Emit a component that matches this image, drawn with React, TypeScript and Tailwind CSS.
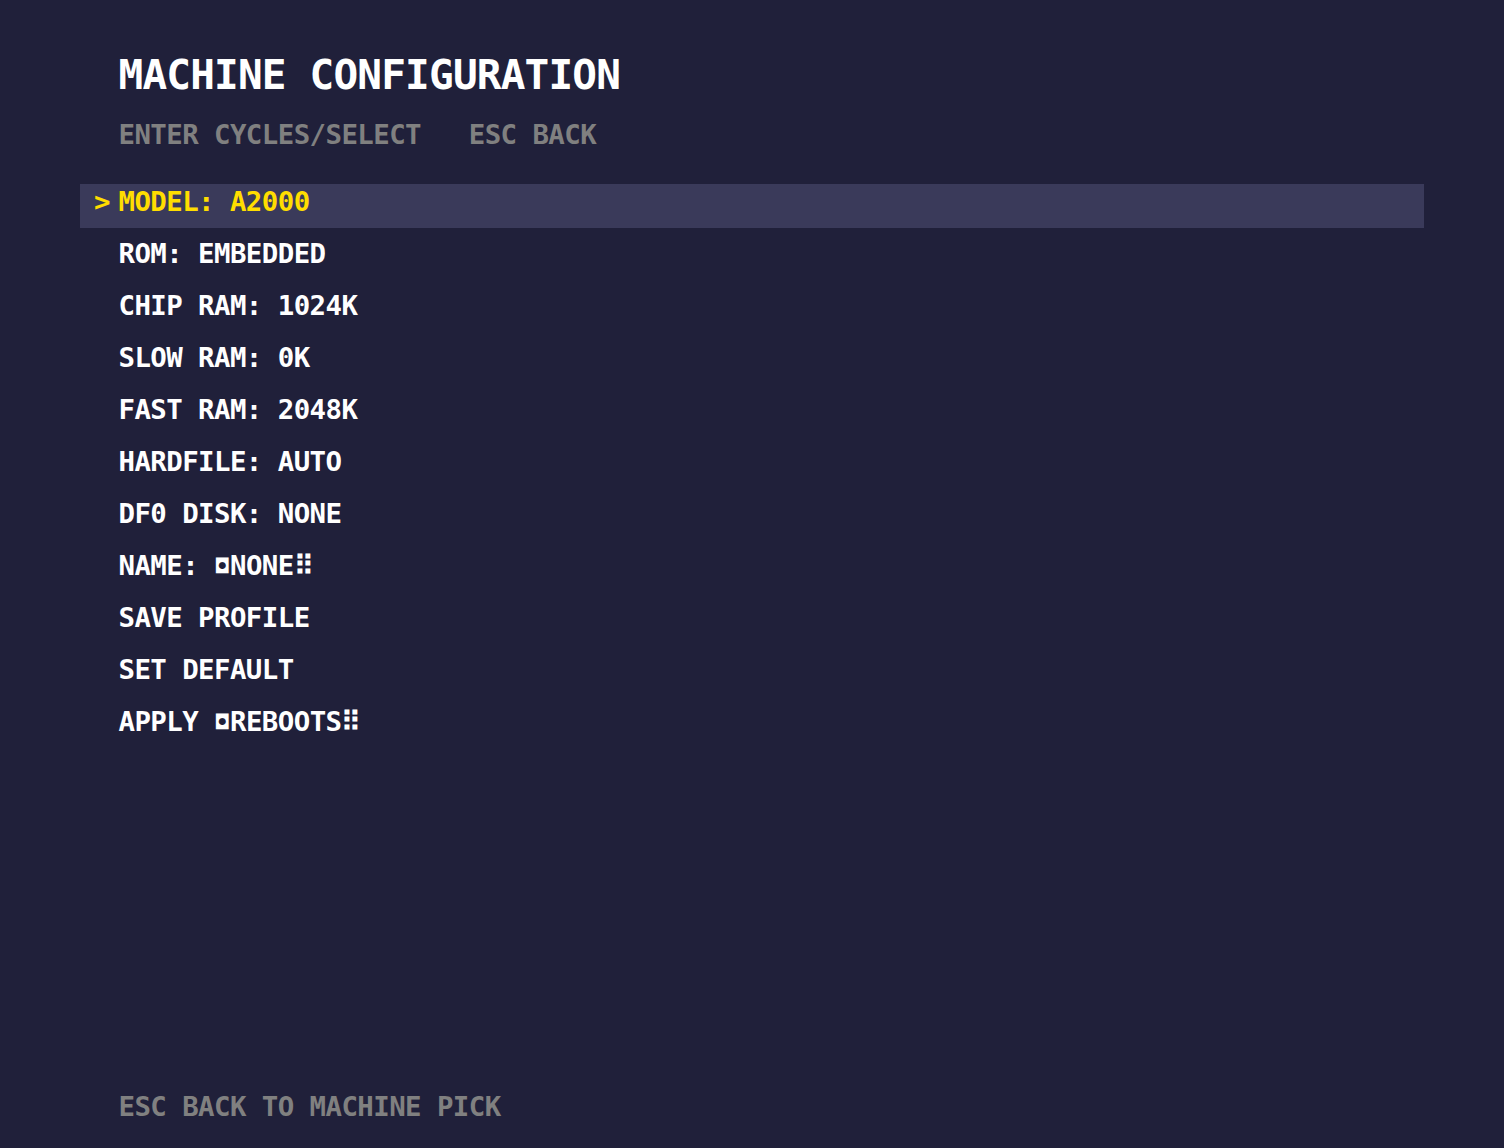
import React from "react";

const rows = [
  "MODEL: A2000",
  "ROM: EMBEDDED",
  "CHIP RAM: 1024K",
  "SLOW RAM: 0K",
  "FAST RAM: 2048K",
  "HARDFILE: AUTO",
  "DF0 DISK: NONE",
  "NAME: |NONE|",
  "SAVE PROFILE",
  "SET DEFAULT",
  "APPLY |REBOOTS|",
];

const mono = "font-['DejaVu_Sans_Mono',monospace] font-bold whitespace-pre";

const Label = ({ text }: { text: string }) => {
  const parts = text.split("|");
  if (parts.length === 1) return <span>{text}</span>;
  return (
    <span className="flex items-center">
      <span>{parts[0]}</span>
      <span className="w-[16px] pl-[2px] text-[20px] leading-[36px] tracking-normal">◘</span>
      <span>{parts[1]}</span>
      <span className="w-[16px] text-[27.4px] tracking-normal">⠿</span>
    </span>
  );
};

const App: React.FC = () => {
  return (
    <div className="h-screen w-full bg-[#20203a] flex flex-col px-20 pt-[50px] pb-[19px] overflow-hidden">
      <h1 className={`${mono} pl-[38.5px] text-[41px] leading-[50px] tracking-[-0.8px] text-white`}>
        MACHINE CONFIGURATION
      </h1>
      <p className={`${mono} pl-[38.5px] mt-[13px] text-[27.4px] leading-[44px] tracking-[-0.57px] text-[#808080]`}>
        {"ENTER CYCLES/SELECT   ESC BACK"}
      </p>
      <ul className="mt-[27px] flex flex-col gap-2">
        {rows.map((row, i) => (
          <li
            key={row}
            className={`${mono} flex h-[44px] items-center pb-[8px] pl-[14px] text-[27.4px] leading-[36px] tracking-[-0.57px] ${
              i === 0 ? "bg-[#3a3a5a] text-[#ffdd00]" : "text-white"
            }`}
          >
            <span className="w-[24.5px]">{i === 0 ? ">" : ""}</span>
            <Label text={row} />
          </li>
        ))}
      </ul>
      <p className={`${mono} mt-auto pl-[38.5px] text-[27.4px] leading-[44px] tracking-[-0.57px] text-[#808080]`}>
        ESC BACK TO MACHINE PICK
      </p>
    </div>
  );
};

export default App;
